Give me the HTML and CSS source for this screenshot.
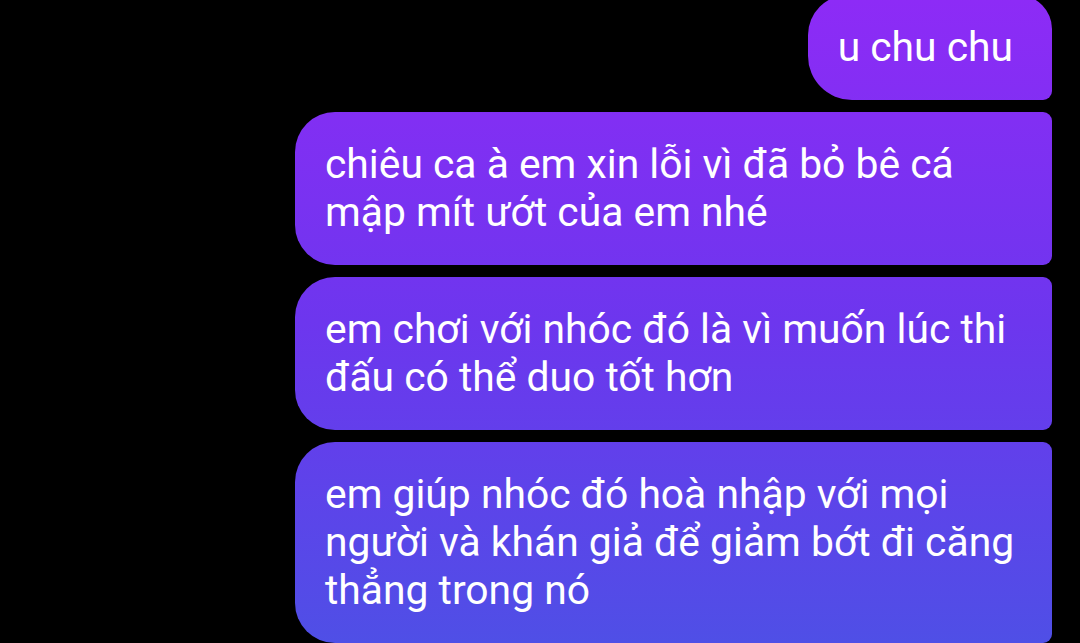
FILE: index.html
```html
<!DOCTYPE html>
<html lang="vi">
  <head>
    <meta charset="UTF-8" />
    <meta name="viewport" content="width=device-width, initial-scale=1.0" />
    <title>Chat</title>
    <link rel="stylesheet" href="styles.css">
  </head>
  <body>
    <div class="thread">
      <div class="bubble first">u chu chu</div>
      <div class="bubble">chiêu ca à em xin lỗi vì đã bỏ bê cá mập mít ướt của em nhé</div>
      <div class="bubble">em chơi với nhóc đó là vì muốn lúc thi đấu có thể duo tốt hơn</div>
      <div class="bubble">em giúp nhóc đó hoà nhập với mọi người và khán giả để giảm bớt đi căng thẳng trong nó</div>
    </div>
  </body>
</html>
```

FILE: styles.css
```css
* {
  margin: 0;
  padding: 0;
  box-sizing: border-box;
}

html,
body {
  height: 100%;
  overflow: hidden;
}

body {
  background-color: #000;
  font-family: Roboto, "Noto Sans", sans-serif;
}

.thread {
  display: flex;
  flex-direction: column;
  align-items: flex-end;
  gap: 12px;
  padding-right: 28px;
  margin-top: -5px;
}

.bubble {
  max-width: 757px;
  padding: 28px 30px 29px;
  font-size: 40.8px;
  line-height: 48px;
  color: #fff;
  border-radius: 40px 9px 9px 40px;
  background: linear-gradient(180deg, #8d2bf6 0%, #6d36ee 50%, #4f4fe6 100%);
  background-attachment: fixed;
}

.bubble.first {
  padding-right: 39px;
  border-radius: 40px 34px 9px 44px;
}
```
